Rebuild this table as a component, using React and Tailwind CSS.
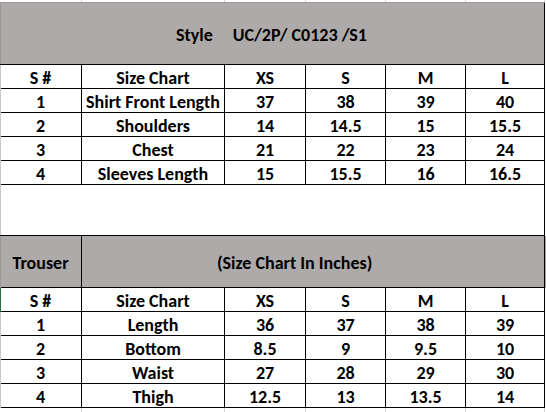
import React from "react";

const widths = ["w-[82px]", "w-[143px]", "w-[81px]", "w-[80px]", "w-[80px]", "w-[79px]"];

const shirt = [
  ["S #", "Size Chart", "XS", "S", "M", "L"],
  ["1", "Shirt Front Length", "37", "38", "39", "40"],
  ["2", "Shoulders", "14", "14.5", "15", "15.5"],
  ["3", "Chest", "21", "22", "23", "24"],
  ["4", "Sleeves Length", "15", "15.5", "16", "16.5"],
];

const trouser = [
  ["S #", "Size Chart", "XS", "S", "M", "L"],
  ["1", "Length", "36", "37", "38", "39"],
  ["2", "Bottom", "8.5", "9", "9.5", "10"],
  ["3", "Waist", "27", "28", "29", "30"],
  ["4", "Thigh", "12.5", "13", "13.5", "14"],
];

function Row({ cells, selected }) {
  return (
    <div className="flex h-[24px] relative">
      {cells.map((c, i) => (
        <div
          key={i}
          className={`${widths[i]} shrink-0 h-full border-r border-b border-black flex items-center justify-center pt-[2px] text-[18px] leading-none font-bold text-black whitespace-nowrap`}
        >
          {c}
        </div>
      ))}
      <div className={`absolute left-0 top-0 w-[1px] h-full ${selected ? "bg-[#217346]" : "bg-[#c6c6c6]"}`} />
    </div>
  );
}

export default function App() {
  return (
    <div
      className="w-[546px] h-[412px] bg-white overflow-hidden flex flex-col"
      style={{ fontFamily: "Carlito, 'Open Sans', sans-serif" }}
    >
      <div className="flex h-[2px]">
        {widths.map((w, i) => (
          <div key={i} className={`${w} shrink-0 border-r border-[#d4d4d4]`} />
        ))}
      </div>
      <div className="h-[1px] w-[545px] bg-[#9a9a9a]" />
      <div className="w-[545px] h-[62px] bg-[#aeaaaa] border-r border-b border-black flex items-center text-[18px] leading-none font-bold text-black pt-[3px] relative whitespace-nowrap">
        <span className="ml-[176px]">Style</span>
        <span className="ml-[20px]">UC/2P/ C0123 /S1</span>
        <div className="absolute left-0 top-0 w-[1px] h-full bg-[#9a9a9a]" />
      </div>
      {shirt.map((r, i) => (
        <Row key={i} cells={r} />
      ))}
      <div className="w-[545px] h-[51px] border-r border-b border-black relative">
        <div className="absolute left-0 top-0 w-[1px] h-full bg-[#c6c6c6]" />
      </div>
      <div className="flex h-[52px] bg-[#aeaaaa] text-[18px] leading-none font-bold text-black relative whitespace-nowrap">
        <div className="w-[82px] shrink-0 border-r border-b border-black flex items-center justify-center pt-[3px]">
          Trouser
        </div>
        <div className="w-[463px] shrink-0 border-r border-b border-black flex items-center pt-[3px]">
          <span className="ml-[135px]">(Size Chart In Inches)</span>
        </div>
        <div className="absolute left-0 top-0 w-[1px] h-full bg-[#9a9a9a]" />
      </div>
      {trouser.map((r, i) => (
        <Row key={i} cells={r} selected={i === 0} />
      ))}
      <div className="flex h-[4px]">
        {widths.map((w, i) => (
          <div key={i} className={`${w} shrink-0 border-r border-[#d4d4d4]`} />
        ))}
      </div>
    </div>
  );
}
